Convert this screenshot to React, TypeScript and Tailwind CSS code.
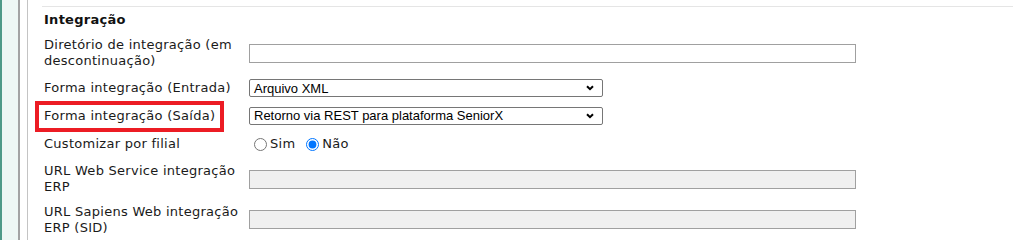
const font = { fontFamily: '"DejaVu Sans", Verdana, sans-serif' };

function Select({ value }: { value: string }) {
  return (
    <div className="flex h-[18px] w-[354px] items-center justify-between rounded-[2px] border border-[#767676] bg-white pl-[4px] pr-[6px] font-['Liberation_Sans',Arial,sans-serif] text-[13px] leading-none tracking-normal text-black">
      <span>{value}</span>
      <svg width="8" height="6" viewBox="0 0 8 6" className="mr-[2px]">
        <path d="M1 1.2 L4 4.2 L7 1.2" fill="none" stroke="#000" strokeWidth="2" />
      </svg>
    </div>
  );
}

function TextInput({ disabled }: { disabled?: boolean }) {
  return (
    <div
      className={
        "h-[19px] w-[607px] border border-[#a0a0a0] " +
        (disabled ? "bg-[#f0f0f0]" : "bg-white")
      }
    />
  );
}

const rows = [
  { label: ["Diretório de integração (em", "descontinuação)"], h: "h-[42px]", field: <TextInput /> },
  { label: ["Forma integração (Entrada)"], h: "h-[28px]", field: <Select value="Arquivo XML" /> },
  { label: ["Forma integração (Saída)"], h: "h-[27px]", field: <Select value="Retorno via REST para plataforma SeniorX" />, marked: true },
  { label: ["Customizar por filial"], h: "h-[30px]", radios: true },
  { label: ["URL Web Service integração", "ERP"], h: "h-[40px]", field: <TextInput disabled /> },
  { label: ["URL Sapiens Web integração", "ERP (SID)"], h: "h-[41px]", field: <TextInput disabled /> },
];

export default function App() {
  return (
    <div className="flex h-[240px] w-[1013px] overflow-hidden bg-white text-[13px] leading-[16px] tracking-[0.27px] text-[#1a1a1a]" style={font}>
      {/* left navigation edge */}
      <div className="w-[2px] bg-[#4f9a88]" />
      <div className="w-[18px] border-r-2 border-[#a3a3a3] bg-[#eef7f4]" />
      <div className="w-[8px] border-r border-[#c4c4c4]" />

      <div className="flex-1 pl-[14px] pt-[6px]">
        <div className="border-t border-[#e5e5e5] pl-[2px]">
          <div className="flex h-[25px] items-center font-bold text-[#111]">Integração</div>

          {rows.map((row) => (
            <div key={row.label[0]} className={"flex items-center " + row.h}>
              <div className="w-[205px] shrink-0">
                <span className="relative inline-block whitespace-nowrap">
                  {row.label.map((l) => (
                    <div key={l}>{l}</div>
                  ))}
                  {row.marked && (
                    <span className="absolute -bottom-[8px] -left-[9px] -right-[9px] -top-[7px] border-4 border-[#ec1c24]" />
                  )}
                </span>
              </div>
              {row.radios ? (
                <div className="flex items-center">
                  <label className="flex items-center">
                    <input type="radio" name="filial" className="m-0 ml-[5px] mr-[3px] h-[13px] w-[13px] accent-[#0075ff]" />
                    Sim
                  </label>
                  <label className="ml-[11px] flex items-center">
                    <input type="radio" name="filial" defaultChecked className="m-0 mr-[3px] h-[13px] w-[13px] accent-[#0075ff]" />
                    Não
                  </label>
                </div>
              ) : (
                row.field
              )}
            </div>
          ))}
        </div>
      </div>
    </div>
  );
}
